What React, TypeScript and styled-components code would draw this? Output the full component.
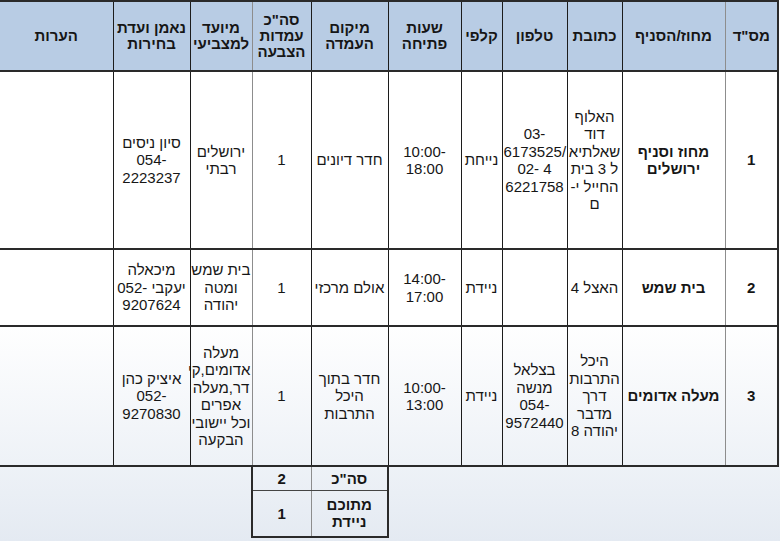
import React from "react";
import styled, { createGlobalStyle } from "styled-components";

type Ln = string | { ltr: string };

interface SheetRow {
  height: number;
  cells: Ln[][];
}

const headers: Ln[][] = [
  ['מס"ד'],
  ["מחוז/הסניף"],
  ["כתובת"],
  ["טלפון"],
  ["קלפי"],
  ["שעות", "פתיחה"],
  ["מיקום", "העמדה"],
  ['סה"כ', "עמדות", "הצבעה"],
  ["מיועד", "למצביעי"],
  ["נאמן ועדת", "בחירות"],
  ["הערות"],
];

// column widths, right to left
const widths = [53, 103, 55, 65, 41, 73, 77, 59, 62, 77, 113];
// columns whose left rule is drawn in grey
const softRule = [0, 7];

const rows: SheetRow[] = [
  {
    height: 178,
    cells: [
      ["1"],
      ["מחוז וסניף", "ירושלים"],
      ["האלוף", "דוד", "שאלתיא", "ל 3 בית", "החייל י-", "ם"],
      [{ ltr: "03-" }, { ltr: "6173525/" }, { ltr: "02- 4" }, { ltr: "6221758" }],
      ["נייחת"],
      [{ ltr: "10:00-" }, { ltr: "18:00" }],
      ["חדר דיונים"],
      ["1"],
      ["ירושלים", "רבתי"],
      ["סיון ניסים", { ltr: "054-" }, { ltr: "2223237" }],
      [],
    ],
  },
  {
    height: 77,
    cells: [
      ["2"],
      ["בית שמש"],
      ["האצל 4"],
      [],
      ["ניידת"],
      [{ ltr: "14:00-" }, { ltr: "17:00" }],
      ["אולם מרכזי"],
      ["1"],
      ["בית שמש", "ומטה", "יהודה"],
      ["מיכאלה", { ltr: "052- יעקבי" }, { ltr: "9207624" }],
      [],
    ],
  },
  {
    height: 140,
    cells: [
      ["3"],
      ["מעלה אדומים"],
      ["היכל", "התרבות", "דרך", "מדבר", "יהודה 8"],
      ["בצלאל", "מנשה", { ltr: "054-" }, { ltr: "9572440" }],
      ["ניידת"],
      [{ ltr: "10:00-" }, { ltr: "13:00" }],
      ["חדר בתוך", "היכל", "התרבות"],
      ["1"],
      ["מעלה", "אדומים,קי", "דר,מעלה", "אפרים", "וכל יישובי", "הבקעה"],
      ["איציק כהן", { ltr: "052-" }, { ltr: "9270830" }],
      [],
    ],
  },
];

const renderLines = (lines: Ln[]) =>
  lines.map((l, i) =>
    typeof l === "string" ? (
      <Line key={i}>{l}</Line>
    ) : (
      <Line key={i} $ltr>
        {l.ltr}
      </Line>
    )
  );

export default function App() {
  return (
    <>
      <GlobalStyle />
      <Sheet>
        <colgroup>
          {widths.map((w, i) => (
            <col key={i} style={{ width: w }} />
          ))}
        </colgroup>
        <thead>
          <tr style={{ height: 70 }}>
            {headers.map((h, i) => (
              <HeadCell
                key={i}
                $soft={softRule.includes(i)}
                $first={i === 0}
                $last={i === headers.length - 1}
              >
                {renderLines(h)}
              </HeadCell>
            ))}
          </tr>
        </thead>
        <tbody>
          {rows.map((r, ri) => (
            <tr key={ri} style={{ height: r.height }}>
              {r.cells.map((c, ci) => (
                <Cell
                  key={ci}
                  $soft={softRule.includes(ci)}
                  $first={ci === 0}
                  $last={ci === r.cells.length - 1}
                  $bold={ci < 2}
                >
                  {renderLines(c)}
                </Cell>
              ))}
            </tr>
          ))}
          <tr style={{ height: 24 }}>
            <Blank colSpan={6} />
            <TotalLabel>סה"כ</TotalLabel>
            <TotalValue>2</TotalValue>
            <Blank colSpan={3} />
          </tr>
          <tr style={{ height: 47 }}>
            <Blank colSpan={6} />
            <TotalLabel $bottom>
              <Line>מתוכם</Line>
              <Line>ניידת</Line>
            </TotalLabel>
            <TotalValue $bottom>1</TotalValue>
            <Blank colSpan={3} />
          </tr>
        </tbody>
      </Sheet>
    </>
  );
}

const GlobalStyle = createGlobalStyle`
  html, body {
    margin: 0;
    padding: 0;
  }

  body {
    width: 780px;
    height: 541px;
    overflow: hidden;
    background: linear-gradient(
      to bottom,
      #ffffff 0px,
      #ffffff 320px,
      #eef2f7 462px,
      #e4eaf2 541px
    );
    font-family: "Liberation Sans", "DejaVu Sans", sans-serif;
  }
`;

const Sheet = styled.table`
  direction: rtl;
  border-collapse: collapse;
  table-layout: fixed;
  width: 778px;
  margin-top: 0;
  color: #161616;
`;

const Line = styled.span<{ $ltr?: boolean }>`
  display: block;
  white-space: nowrap;
  direction: ${(p) => (p.$ltr ? "ltr" : "rtl")};
  unicode-bidi: isolate;
`;

const HeadCell = styled.th<{ $soft?: boolean; $first?: boolean; $last?: boolean }>`
  background: #b8cce4;
  font-size: 15px;
  font-weight: bold;
  line-height: 16px;
  text-align: center;
  vertical-align: middle;
  padding: 0 1px;
  border-top: 2px solid #2a2a2a;
  border-bottom: 2px solid #2a2a2a;
  border-left: ${(p) =>
    p.$last ? "none" : `1px solid ${p.$soft ? "#8d8d8d" : "#1c1c1c"}`};
  border-right: ${(p) => (p.$first ? "2px solid #2a2a2a" : "none")};
`;

const Cell = styled.td<{
  $soft?: boolean;
  $first?: boolean;
  $last?: boolean;
  $bold?: boolean;
}>`
  font-size: 15px;
  font-weight: ${(p) => (p.$bold ? "bold" : "normal")};
  line-height: 17.5px;
  text-align: center;
  vertical-align: middle;
  padding: 0 1px;
  border-bottom: 2px solid #2a2a2a;
  border-left: ${(p) =>
    p.$last ? "none" : `1px solid ${p.$soft ? "#8d8d8d" : "#1c1c1c"}`};
  border-right: ${(p) => (p.$first ? "2px solid #2a2a2a" : "none")};
`;

const Blank = styled.td`
  border: none;
  padding: 0;
`;

const TotalLabel = styled.td<{ $bottom?: boolean }>`
  font-size: 15px;
  font-weight: bold;
  line-height: 17px;
  text-align: center;
  vertical-align: middle;
  padding: 0 1px;
  border-right: 2px solid #2a2a2a;
  border-left: 1px solid #8d8d8d;
  border-bottom: ${(p) => (p.$bottom ? "2px solid #2a2a2a" : "1px solid #444")};
`;

const TotalValue = styled.td<{ $bottom?: boolean }>`
  font-size: 15px;
  font-weight: bold;
  text-align: center;
  vertical-align: middle;
  padding: 0;
  border-left: 2px solid #2a2a2a;
  border-bottom: ${(p) => (p.$bottom ? "2px solid #2a2a2a" : "1px solid #444")};
`;
